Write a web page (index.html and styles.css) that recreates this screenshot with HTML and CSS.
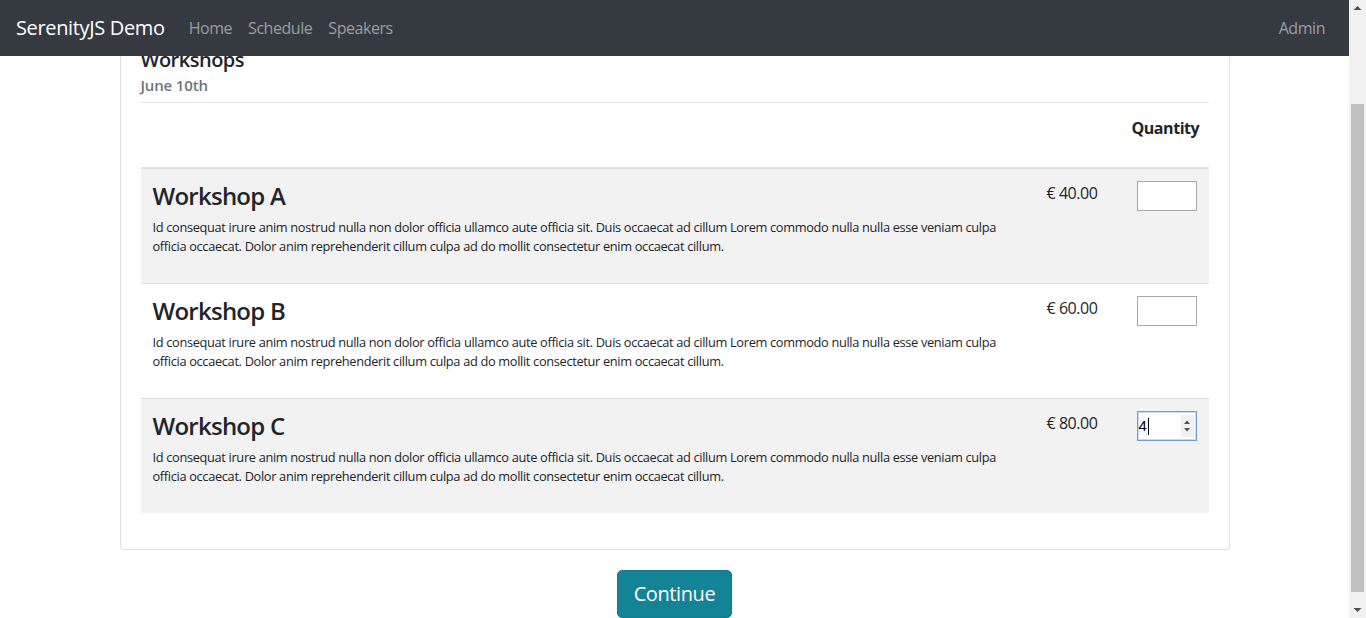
FILE: index.html
```html
<!DOCTYPE html>
<html lang="en">
<head>
<meta charset="utf-8">
<title>SerenityJS Demo</title>
<link rel="stylesheet" href="styles.css">
</head>
<body>
<div class="app">
  <div class="viewport">
    <nav class="navbar">
      <a class="brand" href="#">SerenityJS Demo</a>
      <ul class="nav">
        <li><a href="#">Home</a></li>
        <li><a href="#">Schedule</a></li>
        <li><a href="#">Speakers</a></li>
      </ul>
      <ul class="nav nav-right">
        <li><a href="#">Admin</a></li>
      </ul>
    </nav>
    <main class="container">
      <div class="card">
        <div class="card-body">
          <h5 class="card-title">Workshops</h5>
          <h6 class="card-subtitle">June 10th</h6>
          <hr class="divider">
          <table class="table">
            <colgroup>
              <col class="col-desc">
              <col class="col-price">
              <col class="col-qty">
            </colgroup>
            <thead>
              <tr>
                <th></th>
                <th></th>
                <th class="th-qty">Quantity</th>
              </tr>
            </thead>
            <tbody>
              <tr class="odd">
                <td>
                  <h4 class="ws-title">Workshop A</h4>
                  <p class="ws-desc">Id consequat irure anim nostrud nulla non dolor officia ullamco aute officia sit. Duis occaecat ad cillum Lorem commodo nulla nulla esse veniam culpa officia occaecat. Dolor anim reprehenderit cillum culpa ad do mollit consectetur enim occaecat cillum.</p>
                </td>
                <td class="price">€ 40.00</td>
                <td><div class="qty-wrap"><input class="qty" type="text" aria-label="Quantity for Workshop A"></div></td>
              </tr>
              <tr>
                <td>
                  <h4 class="ws-title">Workshop B</h4>
                  <p class="ws-desc">Id consequat irure anim nostrud nulla non dolor officia ullamco aute officia sit. Duis occaecat ad cillum Lorem commodo nulla nulla esse veniam culpa officia occaecat. Dolor anim reprehenderit cillum culpa ad do mollit consectetur enim occaecat cillum.</p>
                </td>
                <td class="price">€ 60.00</td>
                <td><div class="qty-wrap"><input class="qty" type="text" aria-label="Quantity for Workshop B"></div></td>
              </tr>
              <tr class="odd">
                <td>
                  <h4 class="ws-title">Workshop C</h4>
                  <p class="ws-desc">Id consequat irure anim nostrud nulla non dolor officia ullamco aute officia sit. Duis occaecat ad cillum Lorem commodo nulla nulla esse veniam culpa officia occaecat. Dolor anim reprehenderit cillum culpa ad do mollit consectetur enim occaecat cillum.</p>
                </td>
                <td class="price">€ 80.00</td>
                <td>
                  <div class="qty-wrap">
                    <div class="qty qty-focus">
                      <span class="qty-value">4</span><span class="caret"></span>
                      <span class="spinner">
                        <svg width="10" height="18" viewBox="0 0 10 18"><polygon points="2,7 8,7 5,3.5" fill="#505050"/><polygon points="2,11 8,11 5,14.5" fill="#505050"/></svg>
                      </span>
                    </div>
                  </div>
                </td>
              </tr>
            </tbody>
          </table>
        </div>
      </div>
      <div class="actions">
        <button class="btn" type="button">Continue</button>
      </div>
    </main>
  </div>
  <div class="scrollbar">
    <div class="sb-arrow">
      <svg width="17" height="17" viewBox="0 0 17 17"><polygon points="4.5,10 12.5,10 8.5,6" fill="#505050"/></svg>
    </div>
    <div class="sb-track"><div class="sb-thumb"></div></div>
    <div class="sb-arrow">
      <svg width="17" height="17" viewBox="0 0 17 17"><polygon points="4.5,7 12.5,7 8.5,11" fill="#505050"/></svg>
    </div>
  </div>
</div>
</body>
</html>
```
FILE: styles.css
```css
* { box-sizing: border-box; }

html, body {
  margin: 0;
  padding: 0;
  height: 618px;
  overflow: hidden;
}

body {
  font-family: "Open Sans", "Noto Sans", sans-serif;
  font-size: 16px;
  line-height: 24px;
  color: #212529;
  background: #fff;
}

.app {
  display: grid;
  grid-template-columns: 1fr 17px;
  height: 618px;
}

.viewport {
  position: relative;
  overflow: hidden;
  height: 618px;
}

/* Navbar (fixed over scrolled content) */
.navbar {
  position: absolute;
  top: 0;
  left: 0;
  right: 0;
  height: 56px;
  z-index: 10;
  background: #343a40;
  display: flex;
  align-items: center;
  padding: 0 16px;
}

.brand {
  color: #fff;
  text-decoration: none;
  font-size: 20px;
  line-height: 30px;
  margin-right: 16px;
  letter-spacing: -0.35px;
}

.nav {
  display: flex;
  list-style: none;
  margin: 0;
  padding: 0;
}

.nav a {
  display: block;
  padding: 8px;
  color: rgba(255, 255, 255, 0.5);
  text-decoration: none;
  font-size: 16px;
  line-height: 24px;
  letter-spacing: -0.45px;
}

.nav-right { margin-left: auto; }

/* Content */
.container {
  width: 1110px;
  margin: 0 auto;
  padding-top: 27px;
}

.card {
  border: 1px solid rgba(0, 0, 0, 0.125);
  border-radius: 4px;
  background: #fff;
}

.card-body { padding: 20px; }

.card-title {
  margin: 0;
  font-size: 20px;
  line-height: 24px;
  font-weight: 600;
  letter-spacing: -0.5px;
}

.card-subtitle {
  margin: 1px 0 0;
  font-size: 15px;
  line-height: 24px;
  font-weight: 600;
  color: #6c757d;
  letter-spacing: -0.15px;
}

.divider {
  margin: 5px 0 0;
  border: 0;
  border-top: 1px solid rgba(0, 0, 0, 0.1);
  height: 0;
}

.table {
  width: 100%;
  border-collapse: separate;
  border-spacing: 0;
  table-layout: fixed;
  margin-bottom: 16px;
}

.col-price { width: 85px; }
.col-qty { width: 89px; }

.table th {
  padding: 13px 12px 27px;
  border-bottom: 2px solid #dee2e6;
  line-height: 24px;
  font-weight: 700;
  letter-spacing: -0.45px;
}

.th-qty { text-align: right; }

.table td {
  padding: 12px;
  vertical-align: top;
}

.table tbody tr + tr td { border-top: 1px solid #dee2e6; }

.table tbody tr.odd td { background: #f2f2f2; }

.ws-title {
  margin: 0 0 8px;
  font-size: 24px;
  line-height: 29px;
  font-weight: 600;
  letter-spacing: -0.75px;
}

.ws-desc {
  margin: 0 0 15px;
  font-size: 12.8px;
  line-height: 19px;
  letter-spacing: -0.33px;
}

.price {
  line-height: 24px;
  letter-spacing: -0.45px;
}

.qty-wrap {
  display: flex;
  justify-content: flex-end;
}

.qty {
  width: 60px;
  height: 30px;
  border: 1px solid #a9a9a9;
  background: #fff;
  padding: 1px 2px;
  font-family: "Liberation Sans", sans-serif;
  font-size: 13.33px;
  margin: 0;
  outline: none;
}

.qty-focus {
  display: flex;
  align-items: center;
  border: 1px solid #6f9ce6;
  box-shadow: 0 0 0 1px #c8daf6 inset;
  padding: 0 2px 0 1px;
}

.qty-value {
  font-size: 15px;
  line-height: 18px;
  color: #000;
}

.caret {
  width: 1px;
  height: 17px;
  background: #000;
  margin-left: 1px;
}

.spinner {
  margin-left: auto;
  width: 13px;
  height: 22px;
  background: #f0f0f0;
  display: flex;
  align-items: center;
  justify-content: center;
}

.actions {
  display: flex;
  justify-content: center;
  padding-top: 20px;
}

.btn {
  font-family: "Open Sans", "Noto Sans", sans-serif;
  font-size: 20px;
  line-height: 30px;
  padding: 8px 16px;
  color: #fff;
  background: #138496;
  border: 1px solid #117a8b;
  border-radius: 5px;
  letter-spacing: -0.4px;
}

/* Fake browser scrollbar */
.scrollbar {
  display: flex;
  flex-direction: column;
  background: #f1f1f1;
  height: 618px;
}

.sb-arrow {
  height: 17px;
  flex: none;
}

.sb-arrow svg { display: block; }

.sb-track {
  flex: 1;
  padding: 87px 2px 0;
}

.sb-thumb {
  height: 488px;
  background: #c1c1c1;
}
```
